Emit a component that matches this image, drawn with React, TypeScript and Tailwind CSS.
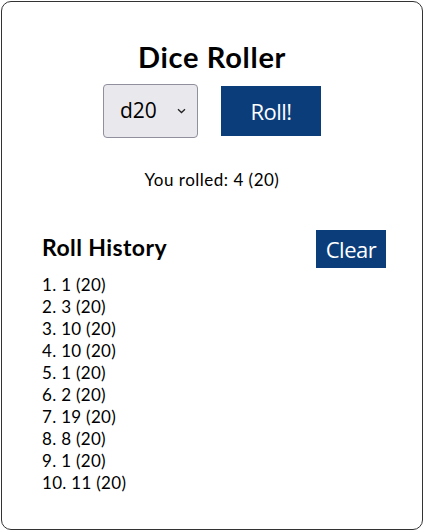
import { useState } from "react";

const HISTORY = [1, 3, 10, 10, 1, 2, 19, 8, 1, 11];

export default function App() {
  const [die] = useState("d20");

  return (
    <div className="pl-px pt-px bg-white">
      <div className="w-[422px] h-[529px] border border-[#333] rounded-[10px] bg-white font-['Lato','Open_Sans',sans-serif] text-black">
        {/* Заголовок і керування */}
        <div className="flex flex-col items-center pt-[37px]">
          <h1 className="text-[29px] font-bold leading-[36px] tracking-[0.7px]">Dice Roller</h1>
          <div className="flex items-center gap-[23px] mt-[9px]">
            <div className="w-[95px] h-[54px] rounded-[4px] border border-[#8f8f9d] bg-[#e9e9ed] flex items-center pl-[16px] pr-[10px] justify-between font-['Open_Sans',sans-serif]">
              <span className="text-[21px]">{die}</span>
              <svg width="9" height="6" viewBox="0 0 9 6" className="mr-[1px]">
                <path d="M1 1.2 L4.5 4.5 L8 1.2" fill="none" stroke="#222" strokeWidth="1.3" />
              </svg>
            </div>
            <button className="w-[100px] h-[50px] bg-[#0a3d7a] text-white text-[22px] font-['Open_Sans',sans-serif] tracking-[-0.5px]">
              Roll!
            </button>
          </div>
          <p className="mt-[31px] text-[17px] leading-[22px] tracking-[0.5px]">You rolled: 4 (20)</p>
        </div>

        {/* Історія кидків */}
        <div className="mt-[35px] pl-[40px] pr-[36px]">
          <div className="flex items-start justify-between">
            <h2 className="text-[23px] font-bold leading-[28px] tracking-[0.4px] mt-[7px]">Roll History</h2>
            <button className="mt-[4px] w-[70px] h-[38px] bg-[#0a3d7a] text-white text-[22px] font-['Open_Sans',sans-serif] tracking-[-0.5px]">
              Clear
            </button>
          </div>
          <ol className="mt-[6px] text-[17px] leading-[22px] tracking-[0.3px]">
            {HISTORY.map((v, i) => (
              <li key={i}>
                {i + 1}. {v} (20)
              </li>
            ))}
          </ol>
        </div>
      </div>
    </div>
  );
}
